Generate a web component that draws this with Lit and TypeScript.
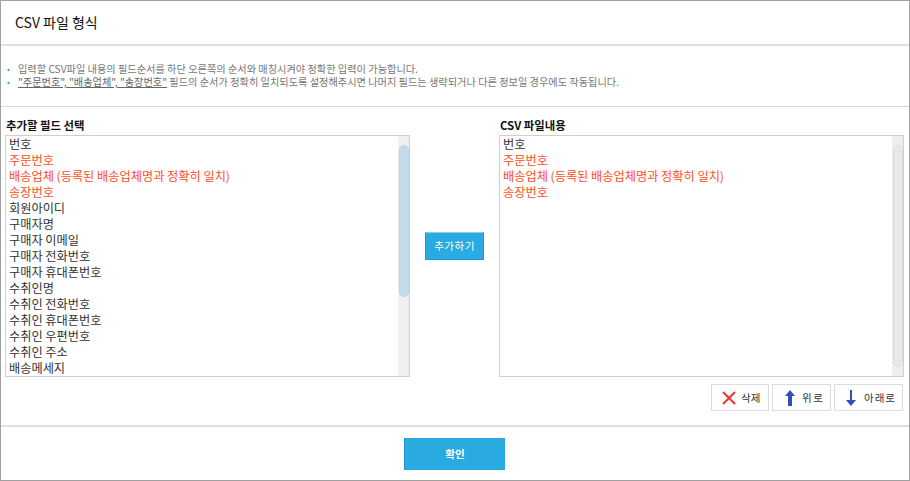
import { LitElement, html, css } from "lit";
import { customElement } from "lit/decorators.js";

const left: [string, boolean][] = [
  ["번호", false],
  ["주문번호", true],
  ["배송업체 (등록된 배송업체명과 정확히 일치)", true],
  ["송장번호", true],
  ["회원아이디", false],
  ["구매자명", false],
  ["구매자 이메일", false],
  ["구매자 전화번호", false],
  ["구매자 휴대폰번호", false],
  ["수취인명", false],
  ["수취인 전화번호", false],
  ["수취인 휴대폰번호", false],
  ["수취인 우편번호", false],
  ["수취인 주소", false],
  ["배송메세지", false],
];
const right = left.slice(0, 4);

@customElement("app-root")
export class AppRoot extends LitElement {
  static styles = css`
    :host {
      display: block;
      width: 910px;
      height: 481px;
      box-sizing: border-box;
      border: 1px solid #a0a0a0;
      background: #fff;
      font-family: "Noto Sans CJK KR", "Liberation Sans", sans-serif;
      color: #222;
      overflow: hidden;
    }
    .title {
      height: 45px;
      box-sizing: border-box;
      border-bottom: 2px solid #e0e0e0;
      padding: 11px 0 0 14px;
      font-size: 14px;
      line-height: 20px;
      color: #111;
      font-weight: 400;
    }
    .notes {
      height: 61px;
      box-sizing: border-box;
      border-bottom: 1px solid #d8d8d8;
      padding: 16px 0 0 6px;
      font-size: 10.2px;
      line-height: 13px;
      color: #777;
    }
    .note { display: flex; white-space: nowrap; }
    .dot { width: 11px; color: #29abe2; font-size: 8px; }
    .note u { color: #666; }
    .columns {
      height: 320px;
      box-sizing: border-box;
      border-bottom: 2px solid #e0e0e0;
      display: flex;
      padding: 0 5px 0 4px;
    }
    .col { width: 405px; }
    .label {
      height: 28px;
      box-sizing: border-box;
      padding-top: 10px;
      font-size: 11.4px;
      line-height: 16px;
      font-weight: 700;
      color: #111;
      padding-left: 1px;
    }
    .box {
      height: 242px;
      box-sizing: border-box;
      border: 1px solid #cfcfcf;
      display: flex;
    }
    .list { flex: 1; overflow: hidden; padding-left: 3px; }
    .item { height: 16px; font-size: 12.2px; line-height: 16px; color: #333; white-space: nowrap; }
    .red { color: #ff4d26; }
    .track {
      width: 11px;
      background: #efefef;
      padding-top: 9px;
      padding-bottom: 9px;
      box-sizing: border-box;
    }
    .thumb { width: 10px; border-radius: 5px; margin-left: 1px; }
    .thumb.blue { height: 152px; background: #c4dbea; border: 1px solid #bdd5e6; box-sizing: border-box; }
    .thumb.gray { height: 222px; background: #e8e8e8; border: 1px solid #dcdcdc; box-sizing: border-box; }
    .middle { width: 89px; display: flex; align-items: flex-start; justify-content: center; }
    .add {
      margin-top: 125px;
      width: 59px;
      height: 28px;
      border: 1px solid #1e96d6;
      border-top-color: #8ccdee;
      background: #29abe2;
      color: #fff;
      font: 400 10.5px/26px "Noto Sans CJK KR", sans-serif;
      letter-spacing: 0.5px;
      padding: 0;
      box-sizing: border-box;
      text-align: center;
    }
    .actions { display: flex; justify-content: flex-end; gap: 3px; padding-top: 7px; padding-right: 1px; }
    .act {
      height: 27px;
      box-sizing: border-box;
      border: 1px solid #dcdcdc;
      background: #fff;
      display: flex;
      align-items: center;
      font: 400 10.5px/16px "Noto Sans CJK KR", sans-serif;
      color: #333;
      padding: 0;
    }
    .act.del { width: 58px; padding-left: 10px; gap: 5px; }
    .act.up { width: 59px; padding-left: 12px; gap: 7px; letter-spacing: 1.5px; }
    .act.down { width: 69px; padding-left: 11px; gap: 8px; letter-spacing: 1px; }
    .footer { display: flex; justify-content: center; padding-top: 11px; padding-right: 1px; }
    .ok {
      width: 101px;
      height: 32px;
      border: 0;
      border-left: 1px solid #1e96d6;
      background: #29abe2;
      color: #fff;
      font: 700 10.5px/32px "Noto Sans CJK KR", sans-serif;
      padding: 0;
    }
  `;

  private renderItems(items: [string, boolean][]) {
    return items.map(([t, r]) => html`<div class="item ${r ? "red" : ""}">${t}</div>`);
  }

  render() {
    return html`
      <div class="title">CSV 파일 형식</div>
      <div class="notes">
        <div class="note"><span class="dot">•</span><span>입력할 CSV파일 내용의 필드순서를 하단 오른쪽의 순서와 매칭시켜야 정확한 입력이 가능합니다.</span></div>
        <div class="note"><span class="dot">•</span><span><u>"주문번호", "배송업체", "송장번호"</u> 필드의 순서가 정확히 일치되도록 설정해주시면 나머지 필드는 생략되거나 다른 정보일 경우에도 작동됩니다.</span></div>
      </div>
      <div class="columns">
        <div class="col">
          <div class="label">추가할 필드 선택</div>
          <div class="box">
            <div class="list">${this.renderItems(left)}</div>
            <div class="track"><div class="thumb blue"></div></div>
          </div>
        </div>
        <div class="middle"><button class="add">추가하기</button></div>
        <div class="col">
          <div class="label">CSV 파일내용</div>
          <div class="box">
            <div class="list">${this.renderItems(right)}</div>
            <div class="track"><div class="thumb gray"></div></div>
          </div>
          <div class="actions">
            <button class="act del">
              <svg width="14" height="14" viewBox="0 0 14 14"><path d="M1 1 L13 13 M13 1 L1 13" stroke="#f5302a" stroke-width="2" fill="none"/></svg>
              삭제
            </button>
            <button class="act up">
              <svg width="10" height="16" viewBox="0 0 10 16"><path d="M5 0 L10 6 H7 V16 H3 V6 H0 Z" fill="#3350b8"/></svg>
              위로
            </button>
            <button class="act down">
              <svg width="10" height="16" viewBox="0 0 10 16"><path d="M4 0 H6 V10 H10 L5 16 L0 10 H4 Z" fill="#3350b8"/></svg>
              아래로
            </button>
          </div>
        </div>
      </div>
      <div class="footer"><button class="ok">확인</button></div>
    `;
  }
}
